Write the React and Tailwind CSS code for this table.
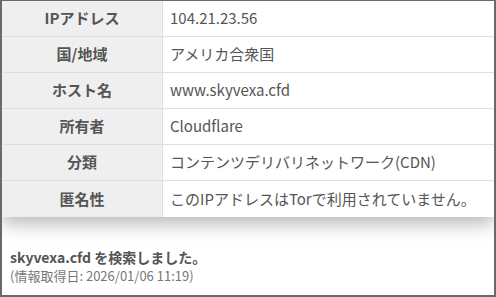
export default function App() {
  const rows = [
    ["IPアドレス", "104.21.23.56"],
    ["国/地域", "アメリカ合衆国"],
    ["ホスト名", "www.skyvexa.cfd"],
    ["所有者", "Cloudflare"],
    ["分類", "コンテンツデリバリネットワーク(CDN)"],
    ["匿名性", "このIPアドレスはTorで利用されていません。"],
  ];
  return (
    <div
      className="w-[496px] h-[297px] overflow-hidden border-t border-b-2 border-x-2 border-[#6b6b63] bg-white flex flex-col"
      style={{ fontFamily: '"Noto Sans CJK JP", "Noto Sans", sans-serif' }}
    >
      <div className="shadow-[0_6px_18px_rgba(0,0,0,0.3)] bg-white">
        {rows.map(([k, v], i) => (
          <div
            key={k}
            className={`flex h-[36px] ${i < rows.length - 1 ? "border-b border-[#dedede]" : ""}`}
          >
            <div className="w-[161px] shrink-0 bg-[#efefef] border-r border-[#dedede] flex items-center justify-center text-[15px] font-bold text-[#555]">
              {k}
            </div>
            <div className="flex-1 flex items-center pl-[7px] text-[15px] text-[#555]">
              {v}
            </div>
          </div>
        ))}
      </div>
      <div className="pl-[8px] pt-[30px] text-[#555]">
        <div className="text-[14px] font-bold leading-[20px]">
          skyvexa.cfd を検索しました。
        </div>
        <div className="text-[13px] leading-[17px] text-[#777]">
          (情報取得日: 2026/01/06 11:19)
        </div>
      </div>
    </div>
  );
}
